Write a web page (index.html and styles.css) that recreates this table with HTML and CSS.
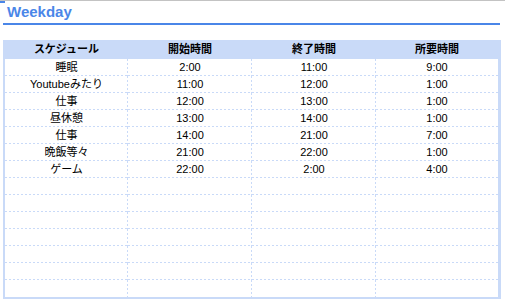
FILE: index.html
```html
<!DOCTYPE html>
<html lang="ja">
<head>
<meta charset="utf-8">
<link rel="stylesheet" href="styles.css">
</head>
<body>
<div class="topbar"><span class="mark"></span></div>
<h1 class="title">Weekday</h1>
<div class="rule"></div>
<table class="sheet">
  <colgroup>
    <col class="c1"><col class="c2"><col class="c3"><col class="c4">
  </colgroup>
  <thead>
    <tr><th>スケジュール</th><th>開始時間</th><th>終了時間</th><th>所要時間</th></tr>
  </thead>
  <tbody>
    <tr><td>睡眠</td><td>2:00</td><td>11:00</td><td>9:00</td></tr>
    <tr><td>Youtubeみたり</td><td>11:00</td><td>12:00</td><td>1:00</td></tr>
    <tr><td>仕事</td><td>12:00</td><td>13:00</td><td>1:00</td></tr>
    <tr><td>昼休憩</td><td>13:00</td><td>14:00</td><td>1:00</td></tr>
    <tr><td>仕事</td><td>14:00</td><td>21:00</td><td>7:00</td></tr>
    <tr><td>晩飯等々</td><td>21:00</td><td>22:00</td><td>1:00</td></tr>
    <tr><td>ゲーム</td><td>22:00</td><td>2:00</td><td>4:00</td></tr>
    <tr><td></td><td></td><td></td><td></td></tr>
    <tr><td></td><td></td><td></td><td></td></tr>
    <tr><td></td><td></td><td></td><td></td></tr>
    <tr><td></td><td></td><td></td><td></td></tr>
    <tr><td></td><td></td><td></td><td></td></tr>
    <tr><td></td><td></td><td></td><td></td></tr>
    <tr class="last"><td></td><td></td><td></td><td></td></tr>
  </tbody>
</table>
</body>
</html>
```
FILE: styles.css
```css
html, body {
  margin: 0;
  padding: 0;
  background: #ffffff;
}
body {
  font-family: "Liberation Sans", Arial, "Noto Sans CJK JP", sans-serif;
  color: #000;
}
.topbar {
  height: 1px;
  background: #c3c3c3;
  position: relative;
}
.mark {
  position: absolute;
  left: 0;
  top: 1px;
  width: 5px;
  height: 2px;
  background: #4a86e8;
}
.title {
  margin: 0;
  padding-left: 7px;
  height: 22px;
  line-height: 22px;
  font-size: 15px;
  font-weight: bold;
  color: #4a86e8;
}
.rule {
  margin-left: 3px;
  width: 497px;
  height: 2px;
  background: #4a86e8;
}
.sheet {
  margin: 15px 0 0 3px;
  width: 498px;
  table-layout: fixed;
  border-collapse: separate;
  border-spacing: 0;
  border-left: 2px solid #c9daf8;
  border-right: 3px solid #c9daf8;
  border-bottom: 2px solid #c9daf8;
  font-size: 11px;
}
.c1 { width: 123px; }
.c2 { width: 124px; }
.c3 { width: 124px; }
.c4 { width: 122px; }
.sheet th {
  height: 19px;
  padding: 0;
  background: #c9daf8;
  font-weight: bold;
  text-align: center;
  vertical-align: middle;
  line-height: 19px;
}
.sheet td {
  box-sizing: border-box;
  height: 17px;
  padding: 0 0 1px;
  text-align: center;
  vertical-align: middle;
  line-height: 16px;
  background-image:
    repeating-linear-gradient(to right, #c9daf8 0 2px, transparent 2px 4px),
    repeating-linear-gradient(to bottom, #c9daf8 0 2px, transparent 2px 4px);
  background-position: left bottom, right top;
  background-size: 100% 1px, 1px 100%;
  background-repeat: no-repeat;
}
.sheet td:last-child {
  background-image:
    repeating-linear-gradient(to right, #c9daf8 0 2px, transparent 2px 4px);
  background-size: 100% 1px;
  background-position: left bottom;
}
.sheet tr.last td {
  background-image:
    repeating-linear-gradient(to bottom, #c9daf8 0 2px, transparent 2px 4px);
  background-position: right top;
  background-size: 1px 100%;
}
.sheet tr.last td:last-child {
  background-image: none;
}
```
